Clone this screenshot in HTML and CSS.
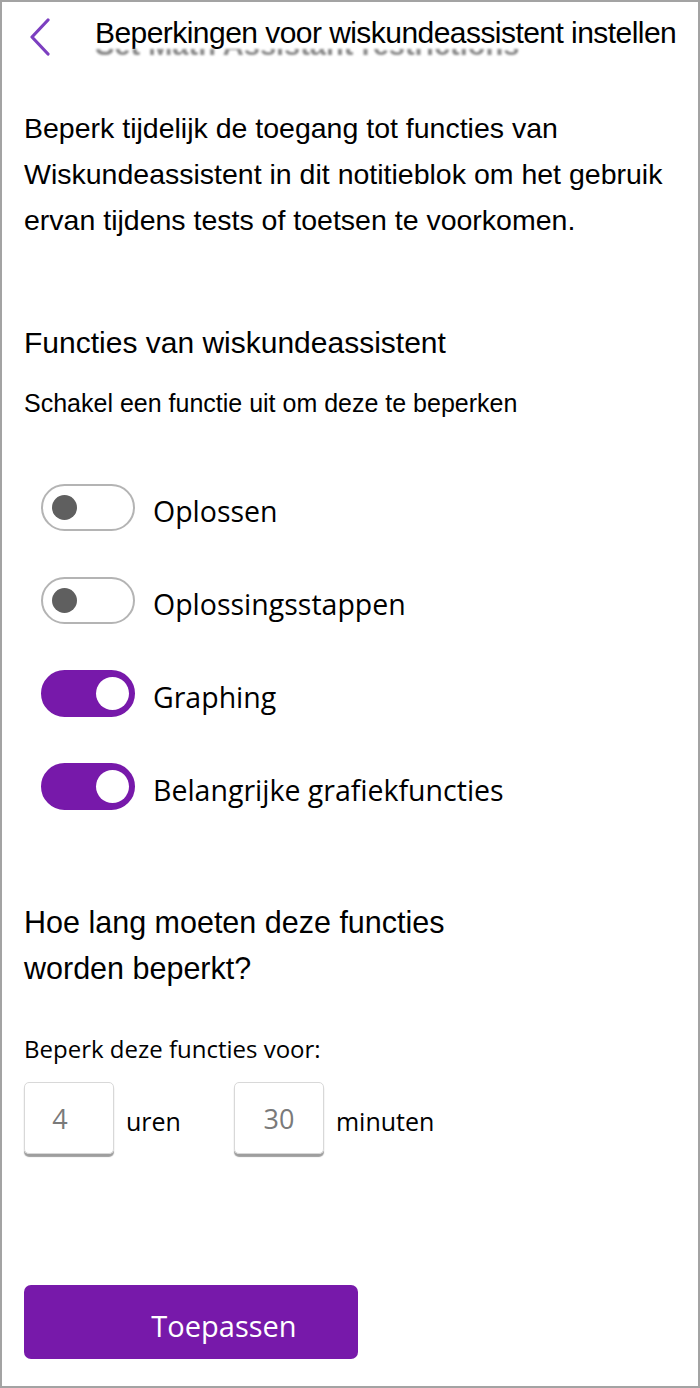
FILE: index.html
```html
<!DOCTYPE html>
<html lang="nl">
<head>
    <meta charset="UTF-8">
    <title>Beperkingen voor wiskundeassistent instellen</title>
    <link rel="stylesheet" href="styles.css">
</head>
<body>
    <div class="panel">
        <div class="header">
            <svg class="back" width="24" height="38" viewBox="0 0 24 38">
                <path d="M20 2 L4 19 L20 36" fill="none" stroke="#7c3fc0" stroke-width="3.2" stroke-linecap="round" stroke-linejoin="round"/>
            </svg>
            <div class="title-wrap">
                <div class="title">Beperkingen voor wiskundeassistent instellen</div>
                <div class="ghost"><span>Set Math Assistant restrictions</span></div>
            </div>
        </div>

        <p class="intro">Beperk tijdelijk de toegang tot functies van Wiskundeassistent in dit notitieblok om het gebruik ervan tijdens tests of toetsen te voorkomen.</p>

        <h3 class="section">Functies van wiskundeassistent</h3>
        <div class="hint">Schakel een functie uit om deze te beperken</div>

        <div class="toggles">
            <div class="row">
                <span class="switch"><span class="knob"></span></span>
                <span class="label">Oplossen</span>
            </div>
            <div class="row">
                <span class="switch"><span class="knob"></span></span>
                <span class="label">Oplossingsstappen</span>
            </div>
            <div class="row">
                <span class="switch on"><span class="knob"></span></span>
                <span class="label">Graphing</span>
            </div>
            <div class="row">
                <span class="switch on"><span class="knob"></span></span>
                <span class="label">Belangrijke grafiekfuncties</span>
            </div>
        </div>

        <h3 class="section duration">Hoe lang moeten deze functies<br>worden beperkt?</h3>
        <div class="for">Beperk deze functies voor:</div>
        <div class="time">
            <div class="box">4</div>
            <span class="unit">uren</span>
            <div class="box second">30</div>
            <span class="unit">minuten</span>
        </div>

        <button class="apply">Toepassen</button>
    </div>
</body>
</html>
```

FILE: styles.css
```css
html, body {
    margin: 0;
    background: #fff;
}

.panel {
    width: 700px;
    height: 1388px;
    box-sizing: border-box;
    border: 2px solid #a3a3a3;
    font-family: "Liberation Sans", Arial, sans-serif;
    color: #000;
    padding: 0 0 0 22px;
}

.header {
    display: flex;
    align-items: flex-start;
    padding-top: 15px;
}

.back {
    margin-left: 4px;
    margin-top: 1px;
}

.title-wrap {
    margin-left: 43px;
}

.title {
    font-size: 30px;
    letter-spacing: -0.55px;
    line-height: 32px;
    background: #fff;
    position: relative;
}

.ghost {
    height: 8px;
    overflow: hidden;
    color: #8a8a8a;
    font-size: 29px;
    font-weight: bold;
    filter: blur(1px);
}

.ghost span {
    display: block;
    margin-top: -20px;
}

.intro {
    margin: 48px 0 0;
    font-size: 28.5px;
    line-height: 46px;
    width: 660px;
}

.section {
    font-weight: normal;
    font-size: 30px;
    margin: 77px 0 0;
    line-height: 46px;
}

.hint {
    font-size: 25px;
    line-height: 30px;
    margin-top: 22px;
}

.toggles {
    margin-top: 66px;
    display: flex;
    flex-direction: column;
    gap: 46px;
}

.row {
    display: flex;
    align-items: center;
    margin-left: 17px;
}

.switch {
    width: 94px;
    height: 47px;
    box-sizing: border-box;
    border: 2px solid #b4b4b4;
    border-radius: 24px;
    display: flex;
    align-items: center;
    padding-left: 9px;
}

.knob {
    width: 25px;
    height: 25px;
    border-radius: 50%;
    background: #5f5f5f;
}

.switch.on {
    background: #7719aa;
    border-color: #7719aa;
    justify-content: flex-end;
    padding-right: 4px;
}

.switch.on .knob {
    width: 33px;
    height: 33px;
    background: #fff;
}

.label {
    font-family: "Open Sans", "Liberation Sans", sans-serif;
    font-size: 28.5px;
    line-height: 40px;
    margin-left: 18px;
    margin-top: 6px;
}

.duration {
    margin-top: 89px;
    font-size: 30.5px;
}

.for {
    font-family: "Open Sans", "Liberation Sans", sans-serif;
    font-size: 24px;
    margin-top: 41px;
}

.time {
    display: flex;
    align-items: center;
    margin-top: 17px;
}

.box {
    width: 90px;
    height: 72px;
    box-sizing: border-box;
    border: 1px solid #d8d8d8;
    border-radius: 5px;
    box-shadow: 0 3px 1px #9e9e9e;
    display: flex;
    align-items: center;
    justify-content: center;
    font-family: "Open Sans", "Liberation Sans", sans-serif;
    font-size: 27px;
    color: #7a7a7a;
    padding-right: 18px;
}

.box.second {
    margin-left: 53px;
    padding-right: 0;
}

.unit {
    font-family: "Open Sans", "Liberation Sans", sans-serif;
    font-size: 25px;
    margin-left: 12px;
    margin-top: 6px;
}

.apply {
    display: block;
    margin-top: 131px;
    width: 334px;
    height: 74px;
    border: none;
    border-radius: 7px;
    background: #7719aa;
    color: #fff;
    font-family: "Open Sans", "Liberation Sans", sans-serif;
    font-size: 29px;
    padding: 6px 0 0 66px;
}
```
